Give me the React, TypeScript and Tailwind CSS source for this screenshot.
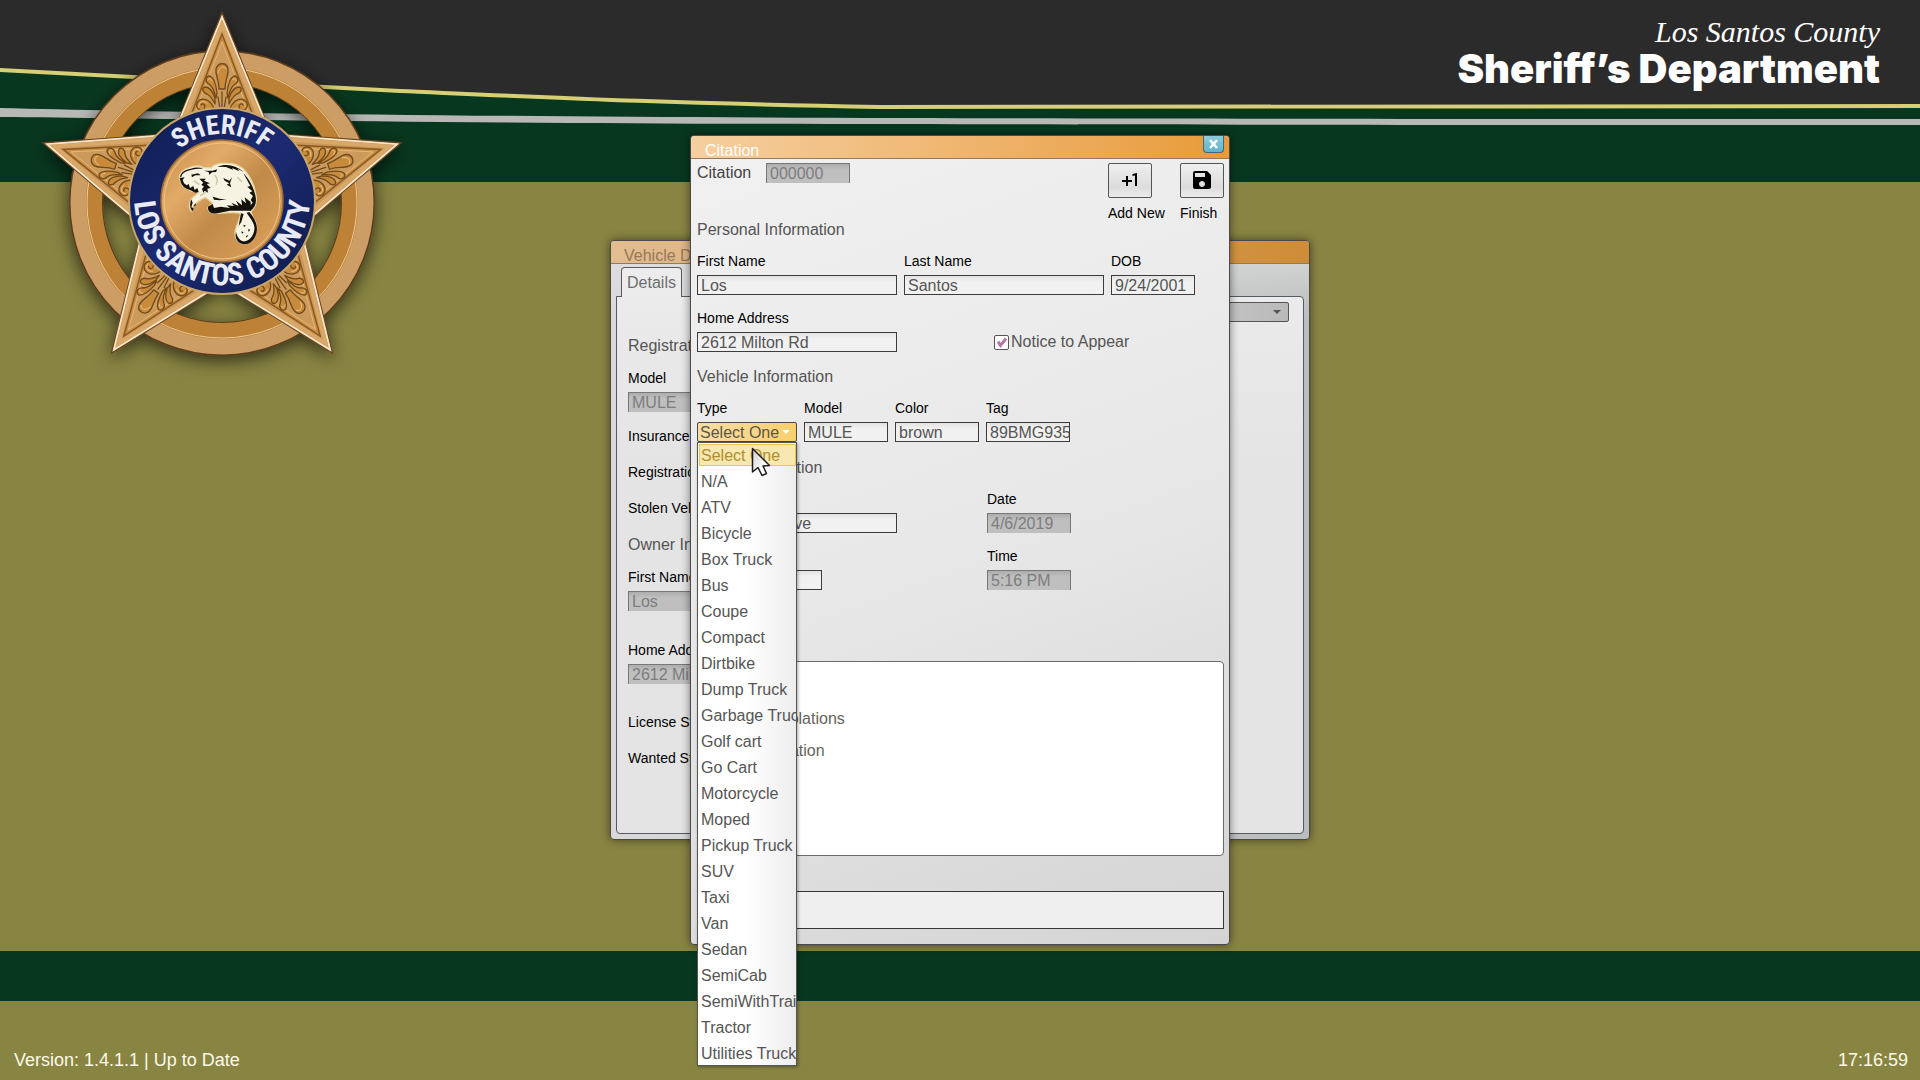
import { useState } from "react";
import type { ReactNode } from "react";
import { MdPlusOne, MdSave } from "react-icons/md";

const vehicleTypes = [
    "Select One", "N/A", "ATV", "Bicycle", "Box Truck", "Bus", "Coupe", "Compact",
    "Dirtbike", "Dump Truck", "Garbage Truck", "Golf cart", "Go Cart", "Motorcycle",
    "Moped", "Pickup Truck", "SUV", "Taxi", "Van", "Sedan", "SemiCab",
    "SemiWithTrailer", "Tractor", "Utilities Truck",
];

const inputStyle = "h-5 w-full border border-[#3c3c3c] bg-linear-to-b from-[#e2e2e2] to-[#f1f1f1] to-30% pl-[3px] pt-px text-base leading-[18px] text-[#555] outline-none";
const disabledStyle = "h-5 w-full border border-b-0 border-[#777] bg-linear-to-b from-[#adadad] to-[#bfbfbf] to-30% pl-[3px] text-base leading-[18px] text-[#7d7d7d]";

function Field({id, label, value, width, disabled}: {id: string, label: string, value: string, width: string, disabled?: boolean}){
    return (
        <div className={`flex flex-col gap-1 shrink-0 ${width}`}>
            <label htmlFor={id} className="text-sm leading-5 text-black whitespace-nowrap">{label}</label>
            <input id={id} defaultValue={value} disabled={disabled} className={disabled ? disabledStyle : inputStyle} />
        </div>
    )
}

function Heading({children}: {children: ReactNode}){
    return <h2 className="text-base leading-6 text-[#555] whitespace-nowrap">{children}</h2>
}

function Header(){
    return (
        <header className="relative h-[182px] bg-[#08371f]">
            <svg className="absolute inset-0 w-full h-full" viewBox="0 0 1920 182" preserveAspectRatio="none">
                <path d="M0 0H1920V106C1500 109 1150 110 880 107C660 103 560 98 400 91C260 84 120 77 0 70Z" fill="#2b2b2b" />
                <path d="M0 70C120 77 260 84 400 91C560 98 660 103 880 107C1150 110 1500 109 1920 106" fill="none" stroke="#d6cf74" strokeWidth="4" />
                <path d="M0 108C200 113 500 117 900 118C1300 119 1600 119 1920 119V125C1600 125 1300 125 900 124C500 124 200 119 0 117Z" fill="#b8b8b6" />
            </svg>
            <div className="relative flex flex-col items-end pr-10 pt-3 text-white">
                <p className="font-['Liberation_Serif'] italic text-[30px] leading-10">Los Santos County</p>
                <h1 className="font-['Inter'] font-black text-[40px] leading-[34px]">Sheriff’s Department</h1>
            </div>
        </header>
    )
}

function StarArm({angle}: {angle: number}){
    return (
        <g transform={`rotate(${angle})`}>
            <path d="M0 -188L51 -62H-51Z" fill="#c9975a" stroke="#6b4520" strokeWidth="1.5" />
            <path d="M-49 -65L0 -184L49 -65" fill="none" stroke="#f8e6cb" strokeWidth="1.8" />
            <path d="M-45 -65L0 -176L45 -65" fill="none" stroke="#d9a767" strokeWidth="4" />
            <path d="M-37 -70L0 -167L37 -70Z" fill="#cb8f42" stroke="#8a5a22" strokeWidth="1.5" />
            <path d="M-34 -70L0 -159L34 -70Z" fill="#cc9a5c" stroke="#e7bd83" strokeWidth="0.8" />
            <g fill="#c88a3a" stroke="#6f4a1a" strokeWidth="1.3" strokeLinecap="round" strokeLinejoin="round">
                <path d="M-3 -112C-3 -122 -7 -126 -6 -132C-4 -139 5 -139 6 -132C7 -126 3 -122 3 -112Z" />
                <path d="M-5 -108C-6 -117 -8 -123 -12 -125C-17 -125 -17 -119 -13 -117C-9 -114 -8 -110 -6 -103Z" />
                <path d="M5 -108C6 -117 8 -123 12 -125C17 -125 17 -119 13 -117C9 -114 8 -110 6 -103Z" />
                <path d="M-7 -103C-9 -109 -12 -114 -17 -114C-21 -113 -19 -108 -15 -107C-11 -105 -9 -101 -7 -97Z" />
                <path d="M7 -103C9 -109 12 -114 17 -114C21 -113 19 -108 15 -107C11 -105 9 -101 7 -97Z" />
                <path d="M-8 -92C-11 -102 -21 -105 -25 -98C-27 -91 -18 -88 -17 -94C-17 -97 -20 -98 -21 -96" />
                <path d="M8 -92C11 -102 21 -105 25 -98C27 -91 18 -88 17 -94C17 -97 20 -98 21 -96" />
                <path d="M0 -109V-92M-4 -104L-2 -92M4 -104L2 -92" fill="none" />
            </g>
            <g fill="none" stroke="#efcb97" strokeWidth="0.8" strokeLinecap="round">
                <path d="M-4 -128C-3 -134 2 -136 4 -132M-14 -121C-13 -123 -11 -123 -10 -120M10 -121C12 -123 14 -122 14 -120" />
                <path d="M-23 -94C-24 -99 -19 -101 -15 -98M15 -98C19 -101 24 -99 23 -94" />
            </g>
        </g>
    )
}

function Beaver(){
    return (
        <g transform="translate(130 90) scale(0.3333)">
            <path d="M148 262C150 246 162 238 178 233C192 227 206 226 218 232L242 234C252 224 268 219 290 220C312 219 336 228 348 246C364 266 374 290 377 312C382 330 378 350 364 364C360 374 380 392 380 412C380 438 364 460 344 462C324 460 312 444 316 422C320 402 330 390 332 370C306 364 290 370 262 370C246 372 232 366 234 352L248 340C240 332 232 326 226 322C208 330 194 340 190 350L186 364C176 358 176 342 184 326L206 308C198 304 188 306 182 302C168 296 158 288 154 280Z" fill="#f7f3e2" stroke="#ead7a4" strokeWidth="4" />
            <g fill="#15120c">
                <path d="M150 262C152 246 166 239 182 236C196 231 208 231 220 236L206 236C194 236 182 240 172 243C162 247 156 252 154 260Z" />
                <path d="M149 264L164 262L158 270L162 280L170 286L176 282L180 294L190 288L194 300L202 294L206 306L196 308L182 301C166 296 156 288 153 278Z" />
                <path d="M184 254L204 250L212 256L196 256L186 262ZM208 266L228 266L222 272L240 280L230 282L242 294L232 296L234 308L224 302L220 308L216 296L222 290L214 284L220 278Z" />
                <path d="M222 242L248 242L262 238L258 246L246 247L238 254L236 246Z" />
                <path d="M262 230C288 220 316 224 342 246L322 236L328 244L306 234L310 240L288 231Z" />
                <path d="M280 264L298 272L306 262L300 280L304 292L290 284L298 280L284 272Z" />
                <path d="M340 250C360 270 370 292 376 316C381 336 376 354 360 364L356 352L368 338L362 330L369 318L358 308L367 304L352 290L361 288Z" />
                <path d="M234 350L248 342L252 354L272 350L300 354L290 346L312 348L304 338L326 348L318 332L336 346L334 328L348 340L344 322L362 336L362 362L300 362L262 370C244 374 232 364 234 350Z" />
                <path d="M248 320L272 327L290 327L270 331L252 329ZM184 328C178 344 180 356 188 364L191 354L184 352L188 338ZM196 340L190 350L198 346Z" />
                <path d="M358 366C374 386 384 404 380 426C374 452 358 466 338 462C322 458 314 444 318 426C322 444 334 457 346 454C364 448 375 430 373 410C370 392 358 382 350 368Z" />
                <path d="M333 370L341 372L334 396L326 408ZM340 404L348 407L342 411ZM354 418L361 419L356 425ZM334 424L341 427L336 431ZM348 438L355 435L350 443Z" />
            </g>
            <path d="M192 272L208 284M254 256C262 264 264 274 258 284M322 262L336 276M210 318L228 306" stroke="#c9c3a4" strokeWidth="4" fill="none" />
        </g>
    )
}

function Badge(){
    return (
        <svg className="absolute left-0 top-0 w-[440px] h-[380px]" viewBox="0 0 440 380" role="img" aria-label="Los Santos County Sheriff">
            <defs>
                <filter id="badgeShadow" x="-20%" y="-20%" width="140%" height="140%">
                    <feDropShadow dx="0" dy="5" stdDeviation="9" floodColor="#000" floodOpacity="0.65" />
                </filter>
                <linearGradient id="gold" x1="0" y1="0" x2="1" y2="1">
                    <stop offset="0" stopColor="#c58c47" />
                    <stop offset="0.3" stopColor="#e3ab68" />
                    <stop offset="0.55" stopColor="#c18a48" />
                    <stop offset="1" stopColor="#e0a55e" />
                </linearGradient>
                <linearGradient id="navy" x1="0" y1="0" x2="1" y2="1">
                    <stop offset="0" stopColor="#0e1c50" />
                    <stop offset="0.5" stopColor="#1c2a72" />
                    <stop offset="1" stopColor="#0d1b4a" />
                </linearGradient>
                <path id="arcTop" d="M155 201A67 67 0 0 1 289 201" />
                <path id="arcBottom" d="M139 168A88 88 0 1 0 305 168" />
            </defs>
            <g filter="url(#badgeShadow)">
                <circle cx="222" cy="203" r="136" fill="none" stroke="#5b3b1b" strokeWidth="34" />
                <circle cx="222" cy="203" r="143" fill="none" stroke="#cc9e65" strokeWidth="17" />
                <circle cx="222" cy="203" r="128" fill="none" stroke="#bd8234" strokeWidth="16" />
                <circle cx="222" cy="203" r="135" fill="none" stroke="#ecc998" strokeWidth="1" />
                <g transform="translate(222 201)">
                    <StarArm angle={0} />
                    <StarArm angle={72} />
                    <StarArm angle={144} />
                    <StarArm angle={216} />
                    <StarArm angle={288} />
                </g>
            </g>
            <circle cx="222" cy="201" r="93" fill="url(#navy)" stroke="#c9a56a" strokeWidth="2" />
            <circle cx="222" cy="201" r="61" fill="url(#gold)" stroke="#9a6a35" strokeWidth="1.5" />
            <circle cx="222" cy="201" r="58" fill="none" stroke="#efc48a" strokeWidth="1" />
            <g fill="#e8ebf5" fontFamily="'Roboto Condensed', Roboto, sans-serif" fontWeight="700" textAnchor="middle">
                <text fontSize="27"><textPath href="#arcTop" startOffset="50%">SHERIFF</textPath></text>
                <text fontSize="30"><textPath href="#arcBottom" startOffset="50%">LOS SANTOS COUNTY</textPath></text>
            </g>
            <Beaver />
        </svg>
    )
}

function VehicleWindow(){
    return (
        <section className="flex flex-col w-[700px] min-h-[600px] rounded border border-[#4a4a4a] bg-linear-to-r from-[#d9d9d9] to-[#babdbd] shadow-[0_0_8px_rgba(0,0,0,0.5)]">
            <div className="h-[23px] rounded-t border-b border-[#8d7a68] bg-linear-to-r from-[#e2bd90] to-[#cf8c36] pl-[13px] text-base leading-[30px] text-[#94785a]">Vehicle Details</div>
            <div className="flex flex-col flex-1 bg-linear-to-b from-[#e0e0e0]/60 via-transparent via-10% to-transparent px-[5px] pt-[3px] pb-[5px]">
                <div className="flex pl-[5px]">
                    <button className="relative -mb-px h-[30px] w-[61px] rounded-t border border-b-0 border-[#555b60] bg-[#ececec] text-base text-[#6e6e6e]">Details</button>
                </div>
                <div className="flex flex-col flex-1 rounded-b rounded-tr border border-[#555b60] bg-linear-to-b from-[#ebebeb] to-[#e4e4e4] to-30% pl-[11px] pr-[14px] pt-[5px]">
                    <div className="relative flex self-end">
                        <select aria-label="Vehicle record" className="h-5 w-[180px] appearance-none rounded-xs border border-[#555] bg-linear-to-r from-[#d5d5d5] to-[#b9b9b9]" />
                        <i className="absolute right-2 top-2 border-x-4 border-t-4 border-x-transparent border-t-[#555]" />
                    </div>
                    <div className="flex flex-col gap-[10px] pt-3">
                        <Heading>Registration Information</Heading>
                        <Field id="regModel" label="Model" value="MULE" width="w-[100px]" disabled />
                    </div>
                    <div className="flex flex-col gap-4 pt-[14px] text-sm leading-5 text-black">
                        <p>Insurance Status</p>
                        <p>Registration Status</p>
                        <p>Stolen Vehicle</p>
                    </div>
                    <div className="flex flex-col gap-[10px] pt-[15px]">
                        <Heading>Owner Information</Heading>
                        <Field id="ownerFirst" label="First Name" value="Los" width="w-[200px]" disabled />
                    </div>
                    <div className="pt-[29px]">
                        <Field id="ownerAddress" label="Home Address" value="2612 Milton Rd" width="w-[200px]" disabled />
                    </div>
                    <div className="flex flex-col gap-4 pt-7 text-sm leading-5 text-black">
                        <p>License Status</p>
                        <p>Wanted Status</p>
                    </div>
                </div>
            </div>
        </section>
    )
}

function TypeSelect(){
    const [type, setType] = useState("Select One");
    return (
        <div className="relative flex flex-col gap-1 w-[100px] shrink-0">
            <label htmlFor="type" className="text-sm leading-5 text-black">Type</label>
            <div className="relative flex">
                <select id="type" value={type} onChange={(e) => setType(e.target.value)} className="h-5 w-full appearance-none rounded-xs border border-[#4a4a4a] bg-linear-to-r from-[#f8dfa6] to-[#f9cf6c] pl-[2px] pt-px text-base leading-[18px] text-[#5c5647]">
                    {vehicleTypes.map((t) => <option key={t}>{t}</option>)}
                </select>
                <i className="pointer-events-none absolute right-[7px] top-2 border-x-4 border-t-4 border-x-transparent border-t-white" />
            </div>
            <ul role="listbox" aria-label="Type" className="absolute left-0 top-full z-10 w-full overflow-hidden border border-[#555] bg-linear-to-r from-white from-50% to-[#ededed] shadow-[1px_1px_3px_rgba(0,0,0,0.35)]">
                {vehicleTypes.map((t) => (
                    <li key={t} role="option" aria-selected={t === type} onClick={() => setType(t)} className="h-[26px] last:h-6 pl-px py-px text-base leading-6 whitespace-nowrap">
                        <span className={t === type ? "block h-[22px] border border-[#e3c758] bg-[#f6e8b0] pl-px leading-[22px] text-[#b18f2f]" : "block pl-[2px] text-[#555]"}>{t}</span>
                    </li>
                ))}
            </ul>
            <svg className="absolute left-[54px] top-[49px] z-20 w-5 h-[30px]" viewBox="0 0 20 30">
                <defs>
                    <linearGradient id="cursor" x1="0" y1="0" x2="1" y2="1">
                        <stop offset="0" stopColor="#d0d0d0" />
                        <stop offset="0.7" stopColor="#ffffff" />
                    </linearGradient>
                </defs>
                <path d="M1.5 1.5V25L7 20.5L11 28.5L15.5 26.5L12 19L18.5 18.5Z" fill="url(#cursor)" stroke="#1c1c1c" strokeWidth="1.5" strokeLinejoin="round" />
            </svg>
        </div>
    )
}

function ToolButton({label, children}: {label: string, children: ReactNode}){
    return (
        <label className="flex flex-col gap-[5px] w-11 text-sm leading-5 text-black whitespace-nowrap">
            <button className="flex justify-center items-center h-[35px] rounded-xs border border-[#555] bg-linear-to-b from-[#efefef] via-[#dcdcdc] via-70% to-[#ececec] pb-px">{children}</button>
            {label}
        </label>
    )
}

function CitationWindow(){
    return (
        <section className="flex flex-col w-[540px] rounded border border-[#4a4a4a] bg-linear-160 from-[#f1f1f1] via-[#e8e8e8] to-[#d4d4d4] shadow-[0_0_8px_rgba(0,0,0,0.5)]">
            <div className="flex justify-between h-[23px] rounded-t border-b border-[#8d7a68] bg-linear-to-r from-[#f5cf9e] to-[#e89b36] pl-[14px] pr-[5px]">
                <span className="text-base leading-[30px] text-white">Citation</span>
                <button aria-label="Close" className="flex justify-center items-center h-[17px] w-[21px] rounded-b border border-t-0 border-[#3f6a78] bg-linear-to-b from-[#8ccbdc] to-[#5fb4cc]">
                    <svg className="w-[11px] h-[10px]" viewBox="0 0 11 10">
                        <path d="M2 1L9 9M9 1L2 9" stroke="#fff" strokeWidth="2.6" />
                    </svg>
                </button>
            </div>
            <div className="flex flex-col gap-[13px] pl-[6px] pr-[5px] pt-1 pb-[15px]">
                <div className="flex flex-col gap-[9px]">
                    <div className="flex justify-between h-[79px]">
                        <div className="flex flex-col justify-between">
                            <div className="flex">
                                <label htmlFor="citation" className="w-[69px] text-base leading-5 text-[#444]">Citation</label>
                                <div className="flex w-[84px]">
                                    <input id="citation" defaultValue="000000" disabled className={disabledStyle} />
                                </div>
                            </div>
                            <Heading>Personal Information</Heading>
                        </div>
                        <div className="flex items-start gap-7">
                            <ToolButton label="Add New"><MdPlusOne className="size-6" /></ToolButton>
                            <ToolButton label="Finish"><MdSave className="size-6" /></ToolButton>
                        </div>
                    </div>
                    <div className="flex gap-[7px]">
                        <Field id="first" label="First Name" value="Los" width="w-[200px]" />
                        <Field id="last" label="Last Name" value="Santos" width="w-[200px]" />
                        <Field id="dob" label="DOB" value="9/24/2001" width="w-[84px]" />
                    </div>
                </div>
                <div className="flex items-end gap-[97px]">
                    <Field id="address" label="Home Address" value="2612 Milton Rd" width="w-[200px]" />
                    <label className="flex items-center gap-[2px] text-base leading-5 text-[#555]">
                        <span className="relative flex">
                            <input type="checkbox" defaultChecked className="peer size-[15px] appearance-none rounded-xs border border-[#555] bg-white" />
                            <svg className="absolute inset-0 hidden size-[15px] peer-checked:block" viewBox="0 0 15 15">
                                <path d="M4 6.5L6.5 10.5L12 3.5" fill="none" stroke="#b277a5" strokeWidth="3" />
                            </svg>
                        </span>
                        Notice to Appear
                    </label>
                </div>
                <div className="flex flex-col gap-[9px]">
                    <Heading>Vehicle Information</Heading>
                    <div className="flex gap-[7px]">
                        <TypeSelect />
                        <Field id="model" label="Model" value="MULE" width="w-[84px]" />
                        <Field id="color" label="Color" value="brown" width="w-[84px]" />
                        <Field id="tag" label="Tag" value="89BMG935" width="w-[84px]" />
                    </div>
                </div>
                <div className="flex flex-col gap-[9px] pt-px">
                    <Heading>Event Information</Heading>
                    <div className="flex gap-[90px]">
                        <Field id="street" label="Street" value="Alhambra Drive" width="w-[200px]" />
                        <Field id="date" label="Date" value="4/6/2019" width="w-[84px]" disabled />
                    </div>
                </div>
                <div className="flex gap-[165px]">
                    <Field id="area" label="Area" value="" width="w-[125px]" />
                    <Field id="time" label="Time" value="5:16 PM" width="w-[84px]" disabled />
                </div>
                <div className="mt-[58px] h-[195px] rounded border border-[#6b6b6b] bg-white pl-[19px] pt-[41px] text-base leading-8 text-[#66645a]">
                    <p>Parking Violations</p>
                    <p>Documentation</p>
                </div>
                <input aria-label="Notes" className="mt-[22px] h-[38px] border border-[#34363a] bg-[#efefef] px-[3px] text-base text-[#555] outline-none" />
            </div>
        </section>
    )
}

export default function App(){
    return (
        <div className="relative flex flex-col min-h-screen overflow-hidden bg-[#888442] font-['Liberation_Sans',Arial,sans-serif]">
            <Header />
            <Badge />
            <main className="flex-1">
                <div className="absolute inset-0 flex justify-center items-center">
                    <VehicleWindow />
                </div>
                <div className="absolute inset-0 flex justify-center items-center">
                    <CitationWindow />
                </div>
            </main>
            <div className="h-[50px] bg-[#08371f]" />
            <footer className="flex justify-between items-end h-[79px] pl-[14px] pr-3 pb-2 text-lg leading-6 text-[#fdfbe8]">
                <span>Version: 1.4.1.1 | Up to Date</span>
                <span>17:16:59</span>
            </footer>
        </div>
    )
}
